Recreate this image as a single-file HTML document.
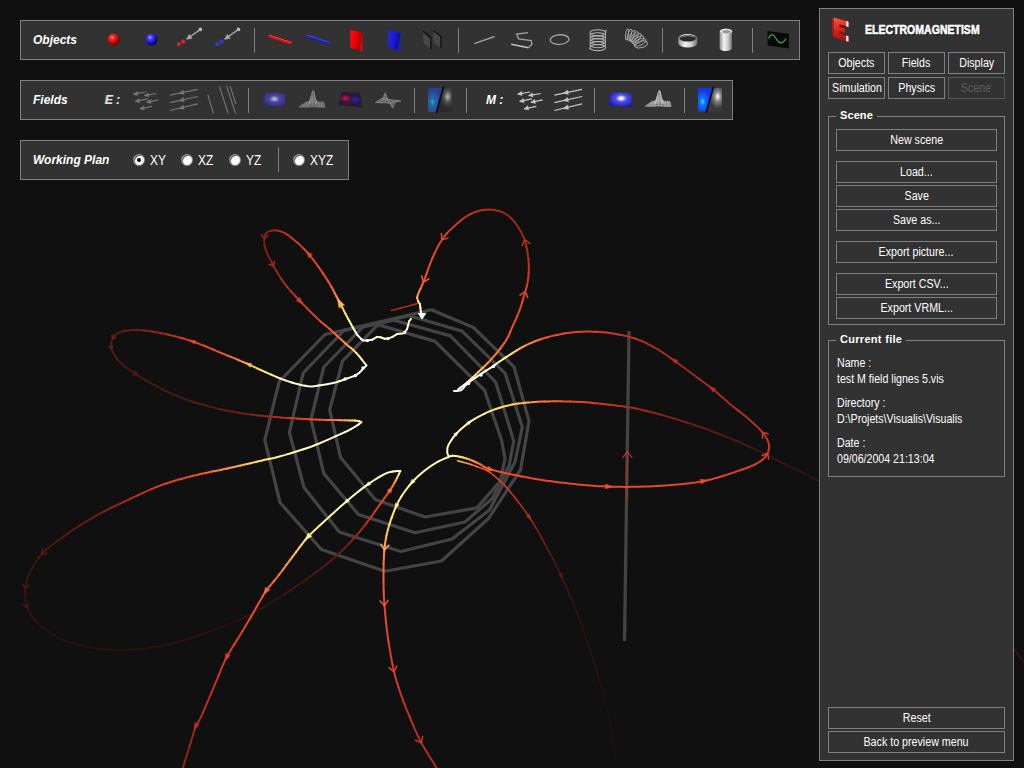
<!DOCTYPE html>
<html><head><meta charset="utf-8"><title>Electromagnetism</title>
<style>
html,body{margin:0;padding:0;}
body{width:1024px;height:768px;overflow:hidden;background:#101010;position:relative;font-family:"Liberation Sans",sans-serif;color:#fff;}
#scene{position:absolute;left:0;top:0;width:1024px;height:768px;}
.tb{position:absolute;box-sizing:border-box;border:1px solid #808080;background:#323232;height:40px;left:20px;}
.tb svg{position:absolute;left:-1px;top:-1px;}
.tl{position:absolute;top:0;line-height:38px;font-size:12px;font-weight:bold;font-style:italic;color:#fff;white-space:nowrap;}
.rl{position:absolute;top:1px;line-height:38px;font-size:13px;color:#fff;white-space:nowrap;transform:scale(0.92,1.06);transform-origin:0 50%;}
.rad{position:absolute;top:13px;width:12px;height:12px;border-radius:50%;background:#fff;box-sizing:border-box;border:1px solid #8a8478;box-shadow:inset 1px 1px 0 #555;}
.rad.on:after{content:"";position:absolute;left:3px;top:3px;width:4px;height:4px;border-radius:50%;background:#000;}
#panel{position:absolute;left:819px;top:8px;width:195px;height:753px;box-sizing:border-box;border:1px solid #808080;background:#323232;}
.btn{position:absolute;box-sizing:border-box;border:1px solid #808080;background:#323232;color:#fff;font-size:12px;text-align:center;height:22px;line-height:20px;white-space:nowrap;}
.btn .t{display:inline-block;transform:scaleX(0.89);transform-origin:50% 50%;}
.btn.dis{color:#5c5c5c;border-color:#555;}
.fs{position:absolute;box-sizing:border-box;border:1px solid #808080;}
.lg{position:absolute;background:#323232;font-size:11px;font-weight:bold;color:#fff;line-height:12px;padding:0 4px;letter-spacing:0.1px;white-space:nowrap;}
.tx{position:absolute;left:17px;font-size:12px;line-height:14px;color:#fff;white-space:nowrap;transform:scaleX(0.885);transform-origin:0 50%;}
#title{position:absolute;left:45px;top:14px;font-size:13px;font-weight:bold;line-height:14px;color:#fff;white-space:nowrap;transform-origin:0 50%;transform:scaleX(0.81);-webkit-text-stroke:0.6px #fff;text-shadow:1px 1px 1px #111;}
</style></head><body>
<svg id="scene" width="1024" height="768" viewBox="0 0 1024 768"><g fill="none" stroke-linecap="round" stroke-linejoin="round">
<path d="M325.0 334.5L279.2 381.6L264.8 440.0L280.0 502.5L321.4 549.5L384.8 571.2L441.5 561.0L488.5 518.5L520.5 470.0L529.0 421.0L514.0 366.8L473.4 327.5L431.4 309.8Z" stroke="#444444" stroke-width="3.2"/>
<path d="M343.8 330.6L303.2 373.0L289.4 432.5L304.0 487.5L339.3 532.0L400.8 551.5L452.0 539.0L489.5 510.0L515.0 462.0L522.3 427.0L505.2 373.4L462.4 331.3L409.4 315.8Z" stroke="#444444" stroke-width="3.2"/>
<path d="M362.5 327.3L323.8 367.0L311.0 419.5L323.8 473.6L358.5 514.5L415.0 532.8L465.0 522.0L492.2 498.5L509.0 466.0L513.8 441.0L495.6 382.0L450.5 335.9L393.8 320.2Z" stroke="#444444" stroke-width="3.2"/>
<path d="M378.0 324.6L342.5 361.0L329.7 410.2L340.6 457.6L375.3 499.5L425.0 517.0L476.9 507.9L500.4 481.0L505.0 458.6L501.5 440.0L484.6 390.4L435.0 341.4L378.0 324.6Z" stroke="#444444" stroke-width="3.2"/>
<path d="M629 331L624.5 641" stroke="#434343" stroke-width="3.3" stroke-linecap="butt"/>
<path d="M627.3 452L626.8 500" stroke="#a83426" stroke-width="1.3"/><path d="M622.8 457.5L627.4 451.5L632 457.5" stroke="#c03a2a" stroke-width="1.2"/>
<path d="M601.0 686.3L601.9 689.5L602.7 692.7L603.5 696.0L604.4 699.2L605.1 702.4L605.9 705.5L606.7 708.6L607.4 711.7L608.1 714.6L608.8 717.5L609.4 720.4L610.0 723.1L610.6 725.6L611.1 728.1L611.9 732.3L612.7 736.4L613.3 740.3L613.8 744.0L614.2 747.4L614.6 750.5L614.9 753.4L615.1 755.9L615.4 758.1L615.6 759.9" stroke="#1e110f" stroke-width="1.6"/>
<path d="M581.3 624.7L582.3 627.4L583.3 630.1L584.3 632.9L585.3 635.7L586.3 638.6L587.3 641.5L588.2 644.4L589.2 647.4L590.2 650.3L591.2 653.3L592.1 656.2L593.1 659.2L594.0 662.2L594.9 665.1L595.8 668.0L596.7 670.9L597.5 673.8L598.4 676.9L599.3 680.0L600.1 683.1L601.0 686.3" stroke="#281210" stroke-width="1.6"/>
<path d="M35.8 620.9L38.4 623.6L40.6 625.6L43.0 627.7L45.5 629.7L48.2 631.7L51.0 633.6L53.9 635.4L56.9 637.1L59.8 638.6L62.8 639.9L65.8 641.1L68.9 642.2L72.1 643.1L75.3 644.0L78.6 644.8L82.0 645.6L85.4 646.3L88.2 646.9L91.1 647.4L94.1 647.9L97.1 648.4L100.1 648.8L103.1 649.2L106.2 649.5L109.3 649.8L112.3 650.0L115.3 650.1L118.6 650.2L121.9 650.2L125.1 650.1L128.4 650.0L131.6 649.8L134.9 649.5L138.3 649.2L141.7 648.8L145.2 648.4L148.1 648.0L151.2 647.5L154.2 647.0L157.3 646.5L160.5 645.9L163.6 645.3L166.8 644.6L170.0 643.9L173.1 643.2L176.3 642.4L179.4 641.6L182.2 640.8L185.1 640.0L187.9 639.1L190.8 638.2L193.6 637.2L196.5 636.2L199.3 635.2L202.1 634.2L205.0 633.2L207.8 632.1L210.7 631.1L213.5 630.0L216.3 628.9L219.2 627.9L222.0 626.8L224.9 625.7L227.7 624.6L230.6 623.5L233.4 622.4L236.3 621.2L239.1 620.0" stroke="#281210" stroke-width="2"/>
<path d="M785.4 464.4L788.0 465.7L790.8 467.1L793.1 468.1L795.0 468.9L796.9 469.7L799.0 470.6L801.6 471.8L804.9 473.5L809.2 475.9L814.7 479.0L816.5 480.0L818.3 481.0L820.3 482.1L822.3 483.2L824.5 484.4L826.7 485.6L829.0 486.8L831.4 488.1L833.9 489.4L836.4 490.8L839.0 492.1L841.6 493.5L844.3 495.0L847.0 496.5L849.8 498.0L852.6 499.5L855.4 501.1L858.3 502.7L861.1 504.4L864.0 506.0L866.9 507.7L869.8 509.5L872.7 511.2L875.5 513.0L878.4 514.8L881.2 516.6L884.0 518.5L886.8 520.3L889.5 522.2L892.2 524.1L894.9 526.1L897.5 528.0L900.0 530.0L902.2 531.8L904.5 533.7L906.8 535.6L909.1 537.5L911.4 539.6L913.7 541.6L916.0 543.7L918.3 545.9L920.6 548.1L923.0 550.3L925.3 552.5L927.6 554.8L929.9 557.1L932.3 559.4L934.6 561.7L936.9 564.1L939.2 566.4L941.4 568.8L943.7 571.1L946.0 573.5L948.2 575.8L950.4 578.2L952.6 580.5L954.8 582.8L956.9 585.1L959.0 587.4L961.1 589.6L963.2 591.8L965.2 594.0L967.2 596.2L969.1 598.3L971.1 600.4L972.9 602.4L974.8 604.4L976.6 606.3L978.3 608.2L980.0 610.0L982.8 613.0L985.5 616.0L988.2 618.9L990.8 621.9L993.3 624.8L995.8 627.6L998.2 630.4L1000.5 633.2L1002.7 635.8L1004.9 638.5L1007.0 641.0L1009.0 643.5L1010.9 645.8L1012.8 648.1L1014.5 650.3L1016.1 652.3L1017.7 654.3L1019.2 656.1L1020.5 657.8L1021.8 659.3L1022.9 660.7L1024.0 662.0M25.2 593.5L25.3 596.8L25.5 600.2L26.0 603.5L26.9 606.6L28.1 609.6L29.6 612.5L31.4 615.4L33.5 618.2L35.8 620.9M239.1 620.0L242.0 618.7L244.8 617.4L247.7 616.0L250.3 614.7L253.0 613.3L255.6 611.8L258.2 610.4L260.9 608.9L263.5 607.3L266.1 605.8L268.8 604.2L271.4 602.5L274.0 600.9L276.6 599.2L279.3 597.6L281.9 595.9L284.5 594.2" stroke="#321411" stroke-width="2"/>
<path d="M570.7 597.6L571.9 600.6L573.2 603.6L574.5 606.7L575.7 609.8L577.0 613.0L578.2 616.2L579.4 619.4L580.4 622.0L581.3 624.7" stroke="#321411" stroke-width="1.6"/>
<path d="M749.2 446.6L752.0 447.8L754.7 449.1L757.5 450.4L760.3 451.7L763.1 453.1L765.9 454.5L768.7 455.9L771.6 457.3L774.4 458.8L777.2 460.2L780.0 461.6L782.7 463.0L785.4 464.4M38.2 558.7L36.2 561.5L34.3 564.4L32.7 567.2L31.2 569.9L29.9 572.4L28.4 575.6L27.3 578.5L26.5 581.2L26.0 584.1L25.6 587.3L25.4 590.3L25.2 593.5M284.5 594.2L287.2 592.5L289.9 590.7L292.7 588.9L295.4 587.0L298.1 585.2L300.8 583.3L303.5 581.4L306.1 579.6L308.7 577.7L311.2 575.9L313.7 574.1" stroke="#3e1612" stroke-width="2"/>
<path d="M562.4 578.7L563.5 581.2L564.6 583.7L565.8 586.4L567.0 589.1L568.2 591.9L569.4 594.7L570.7 597.6" stroke="#3e1612" stroke-width="1.6"/>
<path d="M724.1 435.9L727.1 437.1L729.9 438.2L732.6 439.4L735.4 440.5L738.2 441.7L740.9 442.9L743.7 444.1L746.4 445.3L749.2 446.6M117.7 359.5L120.1 362.2L122.3 364.3L124.6 366.3L127.1 368.2L129.9 370.1L132.9 372.1L136.1 374.2L138.4 375.7L140.8 377.2L143.4 378.8L146.0 380.4L148.8 382.0L151.6 383.6L154.4 385.2L157.3 386.7L160.2 388.2L162.8 389.5L165.6 390.8L168.3 392.1L171.1 393.3L174.0 394.6L176.8 395.8L179.7 397.0L182.5 398.1L185.4 399.2L188.2 400.2L191.3 401.3M66.5 534.4L64.1 536.1L61.3 538.1L58.6 540.0L56.0 541.9L53.5 543.7L51.2 545.6L48.9 547.4L46.7 549.3L44.7 551.2L42.7 553.2L40.3 555.9L38.2 558.7M313.7 574.1L316.0 572.4L318.7 570.4L321.2 568.4L323.7 566.5L326.1 564.5" stroke="#4b1813" stroke-width="2"/>
<path d="M555.8 564.5L557.0 567.1L558.4 569.9L559.8 573.0L561.3 576.3L562.4 578.7" stroke="#4b1813" stroke-width="1.6"/>
<path d="M705.8 428.9L708.8 430.0L711.9 431.2L714.9 432.3L718.0 433.5L721.0 434.7L724.1 435.9M122.6 331.4L120.1 332.1L116.8 333.7L114.6 335.6M112.9 338.1L111.6 341.0L110.9 344.4L111.3 348.2L112.3 350.8L113.7 353.6L115.6 356.6L117.7 359.5M191.3 401.3L194.3 402.3L197.4 403.2L200.4 404.1L203.5 405.0L206.6 405.8L209.7 406.6L212.9 407.4L216.2 408.2L219.2 408.9M79.6 525.6L76.9 527.4L74.2 529.2L71.5 531.0L69.0 532.7L66.5 534.4M326.1 564.5L328.5 562.6L330.8 560.7L333.0 558.8L335.2 556.9L337.4 555.0" stroke="#581a14" stroke-width="2"/>
<path d="M550.6 554.6L552.0 557.1L553.3 559.5L554.5 562.0L555.8 564.5" stroke="#581a14" stroke-width="1.6"/>
<path d="M687.4 422.7L690.5 423.6L693.5 424.7L696.6 425.7L699.7 426.8L702.7 427.8L705.8 428.9M136.1 330.1L132.2 330.1L128.7 330.4L125.5 330.8L122.6 331.4M114.6 335.6L112.9 338.1M219.2 408.9L222.3 409.6L225.5 410.2L228.7 410.9L231.9 411.5L235.2 412.1L238.5 412.7M94.0 516.9L91.1 518.6L88.2 520.3L85.3 522.0L82.5 523.8L79.6 525.6M337.4 555.0L339.6 553.0L341.7 551.0L344.0 548.7" stroke="#661d16" stroke-width="2"/>
<path d="M545.0 544.1L546.4 546.6L547.7 549.1L549.2 551.9L550.6 554.6" stroke="#661d16" stroke-width="1.6"/>
<path d="M265.3 234.6L264.4 238.1L264.2 241.1L264.4 244.6M675.2 418.9L678.3 419.8L681.3 420.7L684.4 421.7L687.4 422.7M144.2 330.6L141.4 330.3L138.7 330.2L136.1 330.1M238.5 412.7L241.7 413.2L245.0 413.7L248.2 414.2L251.4 414.6M102.2 512.4L99.4 513.9L96.7 515.4L94.0 516.9M344.0 548.7L346.3 546.4L348.5 544.1" stroke="#732017" stroke-width="2"/>
<path d="M542.1 538.8L543.6 541.4L545.0 544.1" stroke="#732017" stroke-width="1.6"/>
<path d="M270.8 230.7L267.3 232.2L265.3 234.6M264.4 244.6L265.4 248.8L266.3 251.2L267.4 253.8L268.6 256.6L270.1 259.5L271.6 262.4M660.0 414.5L663.0 415.3L666.1 416.2L669.1 417.1L672.2 418.0L675.2 418.9M150.2 331.2L147.1 330.8L144.2 330.6M251.4 414.6L254.6 415.0L257.8 415.4M110.8 508.1L107.9 509.5L105.1 511.0L102.2 512.4M348.5 544.1L350.7 541.8L352.9 539.4M183.5 765.9L182.8 768.0" stroke="#812219" stroke-width="2"/>
<path d="M536.1 528.0L537.6 530.7L539.2 533.4L540.7 536.1L542.1 538.8" stroke="#812219" stroke-width="1.6"/>
<path d="M275.2 230.3L270.8 230.7M271.6 262.4L273.2 265.4L274.6 268.0L276.1 270.6M647.6 411.2L650.7 412.0L653.8 412.8L656.9 413.6L660.0 414.5M160.2 332.9L156.8 332.2L153.4 331.7L150.2 331.2M257.8 415.4L261.0 415.7L264.3 416.1L267.5 416.3M119.5 503.9L116.6 505.3L113.7 506.7L110.8 508.1M352.9 539.4L355.0 537.1L357.1 534.7M189.7 745.8L188.8 749.0L187.9 751.8L186.6 755.8L185.4 759.7L184.3 763.1L183.5 765.9" stroke="#8e251a" stroke-width="2"/>
<path d="M532.8 522.6L534.5 525.3L536.1 528.0" stroke="#8e251a" stroke-width="1.6"/>
<path d="M278.2 230.7L275.2 230.3M276.1 270.6L277.7 273.3L279.4 276.0L281.2 278.7M499.1 211.1L502.7 212.3L506.0 214.1L508.4 215.8L510.6 217.8L512.8 220.0L514.8 222.3L516.7 224.9L518.5 227.7L520.2 230.6L521.6 233.1L523.5 236.8L524.9 240.9L525.7 244.1M671.1 358.3L673.8 360.2L676.5 362.1L679.2 364.1L681.9 366.1L684.7 368.2L687.4 370.2L690.1 372.3L692.8 374.3L695.5 376.3L698.2 378.3M635.7 408.5L638.6 409.1L641.5 409.8L644.5 410.5L647.6 411.2M165.5 334.0L162.8 333.4L160.2 332.9M267.5 416.3L270.7 416.6L273.9 416.9M128.1 499.8L125.2 501.1L122.4 502.5L119.5 503.9M357.1 534.7L359.1 532.3L361.1 530.0M195.6 727.0L194.7 729.4L193.8 732.3L192.8 735.5L191.8 739.0L190.7 742.5L189.7 745.8" stroke="#9b281c" stroke-width="2"/>
<path d="M527.8 514.8L529.5 517.4L531.2 520.0L532.8 522.6" stroke="#9b281c" stroke-width="1.6"/>
<path d="M281.5 231.6L278.2 230.7M281.2 278.7L283.0 281.4L284.9 284.0L286.9 286.6M485.1 209.7L488.6 209.6L492.0 209.8L495.2 210.2L499.1 211.1M525.7 244.1L526.6 247.8L527.4 251.8L528.0 255.5L528.4 259.0M651.6 345.9L654.7 347.6L657.4 349.2L660.2 350.9L662.9 352.7L665.6 354.5L668.3 356.4L671.1 358.3M698.2 378.3L700.9 380.2L703.7 382.2L706.4 384.2L709.1 386.3L711.8 388.4L714.2 390.3L716.6 392.3L719.0 394.4L721.3 396.5L723.7 398.6L726.1 400.6L728.5 402.7L730.9 404.7L733.3 406.7L735.8 408.6L738.3 410.6M625.4 406.7L628.8 407.2L632.2 407.8L635.7 408.5M431.2 759.3L432.9 762.0L434.4 764.4L435.6 766.4L436.6 768.0M168.4 334.7L165.5 334.0M273.9 416.9L277.1 417.1L280.3 417.4M136.6 495.8L133.8 497.1L130.9 498.5L128.1 499.8M361.1 530.0L363.0 527.6L365.1 524.9M202.8 712.9L201.7 715.4L200.7 717.6L198.5 721.7L197.2 723.5L195.6 727.0" stroke="#a82c1e" stroke-width="2"/>
<path d="M522.1 506.9L524.0 509.6L525.9 512.2L527.8 514.8" stroke="#a82c1e" stroke-width="1.6"/>
<path d="M287.7 234.9L284.9 233.2L281.5 231.6M286.9 286.6L289.0 289.1L291.2 291.6M471.3 213.7L474.8 212.2L478.2 211.0L481.6 210.2L485.1 209.7M528.4 259.0L528.7 262.4L528.8 265.8M635.7 338.8L639.1 340.0L642.3 341.3L645.4 342.7L648.5 344.3L651.6 345.9M738.3 410.6L740.8 412.5L743.2 414.5L745.5 416.3L747.8 418.2L749.9 420.0L752.5 422.4L755.1 424.7L757.4 426.9L759.6 429.1M618.8 405.9L622.1 406.3L625.4 406.7M413.7 726.3L414.9 729.3L416.3 732.4L417.7 735.5L419.2 738.6L420.8 741.7L422.2 744.4L423.9 747.2L425.7 750.3L427.5 753.3L429.4 756.4L431.2 759.3M174.2 336.1L171.3 335.4L168.4 334.7M280.3 417.4L283.5 417.7L286.8 417.9M142.3 493.1L139.5 494.5L136.6 495.8M365.1 524.9L367.2 522.2M210.8 694.0L209.4 697.3L208.0 700.6L206.6 703.9L205.3 707.1L204.0 710.1L202.8 712.9" stroke="#b43020" stroke-width="2"/>
<path d="M516.2 499.2L518.1 501.7L520.1 504.3L522.1 506.9" stroke="#b43020" stroke-width="1.6"/>
<path d="M391.1 310.6L394.1 309.8L397.1 309.0L400.1 308.2" stroke="#b43020" stroke-width="1.3"/>
<path d="M290.6 237.0L287.7 234.9M291.2 291.6L293.5 294.1L295.8 296.6M462.3 219.3L465.1 217.3L467.9 215.5L471.3 213.7M528.8 265.8L528.8 269.2L528.7 272.7M619.4 334.7L622.8 335.3L626.2 336.1L629.4 336.9L632.6 337.8L635.7 338.8M759.6 429.1L761.6 431.2L763.3 433.3L765.4 436.3L767.1 439.2L768.3 442.0L769.0 444.7M609.0 404.7L612.3 405.1L615.6 405.5L618.8 405.9M405.0 705.5L406.2 708.5L407.4 711.4L408.7 714.4L410.0 717.6L411.2 720.5L412.4 723.4L413.7 726.3M180.2 337.7L177.2 336.9L174.2 336.1M286.8 417.9L290.0 418.1M150.9 489.3L148.0 490.6L145.2 491.8L142.3 493.1M367.2 522.2L369.2 519.5L371.2 516.7M218.7 675.3L217.4 678.5L216.1 681.6L214.8 684.7L213.5 687.7L212.2 690.8L210.8 694.0" stroke="#c03322" stroke-width="2"/>
<path d="M510.4 492.1L512.3 494.4L514.2 496.7L516.2 499.2" stroke="#c03322" stroke-width="1.6"/>
<path d="M400.1 308.2L403.1 307.4L406.1 306.6L409.1 305.8L412.1 305.0L415.1 304.2" stroke="#c03322" stroke-width="1.3"/>
<path d="M296.6 242.0L293.6 239.5L290.6 237.0M295.8 296.6L298.1 299.1L300.5 301.6M454.2 226.3L456.8 223.9L459.5 221.6L462.3 219.3M528.7 272.7L528.4 276.3L528.0 279.7M606.3 332.6L609.5 333.0L612.8 333.5L616.1 334.0L619.4 334.7M769.0 444.7L769.1 448.1L768.4 451.3L767.1 454.3M602.4 403.9L605.7 404.3L609.0 404.7M398.5 687.3L399.5 690.3L400.5 693.3L401.5 696.2L402.7 699.5L403.8 702.5L405.0 705.5M183.3 338.5L180.2 337.7M290.0 418.1L293.3 418.3L296.6 418.6M156.6 487.0L153.7 488.1L150.9 489.3M371.2 516.7L373.2 514.0L375.0 511.3M228.0 654.7L226.4 657.8L225.1 660.4L223.8 663.2L222.5 666.1L221.2 669.1L220.0 672.2L218.7 675.3" stroke="#cd3724" stroke-width="2"/>
<path d="M506.9 488.0L508.6 490.0L510.4 492.1" stroke="#cd3724" stroke-width="1.6"/>
<path d="M415.1 304.2L418.1 303.4" stroke="#cd3724" stroke-width="1.3"/>
<path d="M303.8 248.8L301.4 246.4L299.0 244.1L296.6 242.0M300.5 301.6L302.6 303.8L304.9 306.1L307.1 308.4M446.9 233.3L449.3 230.9L451.7 228.6L454.2 226.3M528.0 279.7L527.5 282.9L526.8 286.2M596.5 331.8L599.8 332.0L603.0 332.3L606.3 332.6M767.1 454.3L765.3 457.0L763.0 459.4L759.5 461.9L757.4 463.1L755.3 464.3M592.7 402.9L595.9 403.2L599.2 403.6L602.4 403.9M392.6 664.9L393.2 667.8L393.8 670.6L394.7 674.2L395.6 677.7L396.5 681.0L397.5 684.2L398.5 687.3M189.3 340.3L186.3 339.4L183.3 338.5M296.6 418.6L299.8 418.7M165.4 483.7L162.3 484.8L159.4 485.9L156.6 487.0M375.0 511.3L376.8 508.8L378.5 506.3M234.4 644.1L232.8 646.6L231.2 649.2L229.6 651.9L228.0 654.7" stroke="#d33b26" stroke-width="2"/>
<path d="M498.7 479.6L501.3 482.1L504.1 484.9L506.9 488.0" stroke="#d33b26" stroke-width="1.6"/>
<path d="M312.3 258.5L310.4 256.1L308.4 253.7L306.2 251.2L303.8 248.8M307.1 308.4L309.4 310.7L311.7 313.0L313.9 315.1M439.5 243.6L441.0 241.2L442.5 238.9L444.7 236.0L446.9 233.3M526.8 286.2L526.0 289.0M580.2 331.8L583.5 331.7L586.7 331.6L590.0 331.6L593.3 331.7L596.5 331.8M755.3 464.3L752.8 465.5L749.9 466.7L746.5 468.0L742.3 469.5L740.1 470.3L737.7 471.1L735.1 472.0L732.4 472.9L729.5 473.9M585.9 402.3L589.3 402.6L592.7 402.9M388.7 642.7L389.2 645.9L389.7 649.1L390.3 652.3L390.8 655.6L391.4 658.7L392.0 661.9L392.6 664.9M195.1 342.3L192.2 341.3L189.3 340.3M299.8 418.7L303.0 418.9L306.2 419.1M174.7 480.7L171.6 481.7L168.5 482.7L165.4 483.7M378.5 506.3L380.1 504.1L382.3 501.1M242.4 631.2L240.8 633.8L239.2 636.5L237.6 639.1L236.0 641.6L234.4 644.1" stroke="#da4027" stroke-width="2"/>
<path d="M493.7 475.3L496.1 477.3L498.7 479.6" stroke="#da4027" stroke-width="1.6"/>
<path d="M318.1 266.4L316.1 263.5L314.2 260.9L312.3 258.5M313.9 315.1L316.1 317.2L318.1 319.1L320.6 321.4M432.7 257.5L434.0 254.5L435.4 251.7L436.7 248.9L438.1 246.2L439.5 243.6M526.0 289.0L524.9 292.7L524.2 295.2L523.4 298.0L522.5 301.1M563.8 333.6L567.1 333.1L570.4 332.7L573.6 332.3L576.9 332.0L580.2 331.8M729.5 473.9L726.5 474.9L723.5 475.8L720.4 476.8L717.2 477.7L713.9 478.6L710.7 479.5L707.4 480.2L704.2 480.9L701.4 481.4L698.5 481.9L695.6 482.4L692.7 482.8L689.7 483.2L686.6 483.6L683.6 483.9L680.5 484.2L677.4 484.5L674.3 484.8L671.2 485.0M576.5 401.8L579.5 401.9L582.4 402.1L585.9 402.3M386.1 623.3L386.5 626.6L386.9 629.9L387.3 633.2L387.8 636.5L388.2 639.6L388.7 642.7M204.2 345.8L201.1 344.6L198.1 343.4L195.1 342.3M306.2 419.1L309.3 419.3M181.0 479.0L177.9 479.8L174.7 480.7M382.3 501.1L384.3 498.3M250.4 617.9L248.7 620.6L247.1 623.3L245.5 625.9L244.0 628.6L242.4 631.2" stroke="#e04429" stroke-width="2"/>
<path d="M489.5 472.0L491.5 473.5L493.7 475.3" stroke="#e04429" stroke-width="1.6"/>
<path d="M323.1 273.6L321.4 271.0L319.7 268.6L318.1 266.4M320.6 321.4L323.0 323.4L325.2 325.3M427.0 272.4L428.1 269.3L429.2 266.2L430.4 263.2L431.5 260.2L432.7 257.5M522.5 301.1L521.6 304.2L520.6 307.3L519.6 310.2L518.3 313.5L517.0 316.6M557.1 334.9L560.5 334.2L563.8 333.6M671.2 485.0L668.0 485.3L664.8 485.5L661.7 485.7L658.5 485.9L655.5 486.1L652.5 486.2L649.4 486.4L646.3 486.5L643.2 486.6L640.0 486.7L636.9 486.7L633.8 486.8L630.6 486.8L627.5 486.9L624.3 486.9L621.2 486.8L618.1 486.8L615.0 486.8L612.0 486.7L609.0 486.6L605.8 486.5L602.7 486.3L599.5 486.2L596.3 486.0L593.2 485.7L590.1 485.5L587.0 485.2L583.9 485.0L580.9 484.7L577.8 484.4L574.8 484.1L571.9 483.8L569.0 483.4L566.1 483.1L563.3 482.8L559.8 482.4L556.5 482.0L553.2 481.6L549.9 481.1L546.7 480.7L543.5 480.2L540.4 479.7L537.3 479.2L534.3 478.7L531.2 478.2L528.2 477.6L525.2 477.1L521.9 476.5M570.3 401.5L573.4 401.7L576.5 401.8M384.4 604.4L384.6 607.4L384.9 610.5L385.2 613.6L385.5 616.8L385.8 620.0L386.1 623.3M213.2 349.5L210.2 348.3L207.2 347.0L204.2 345.8M309.3 419.3L312.3 419.4L315.7 419.5M190.3 476.6L187.2 477.3L184.1 478.2L181.0 479.0M384.3 498.3L386.1 495.8L387.8 493.5M256.5 607.1L255.0 609.9L253.5 612.5L252.0 615.1L250.4 617.9" stroke="#e6492b" stroke-width="2"/>
<path d="M485.8 469.7L489.5 472.0" stroke="#e6492b" stroke-width="1.6"/>
<path d="M328.2 281.4L326.5 278.8L324.8 276.1L323.1 273.6M325.2 325.3L327.4 327.1L329.6 328.9M423.9 280.9L424.9 278.3L425.9 275.4L427.0 272.4M517.0 316.6L515.6 319.8L514.2 322.8L512.8 325.9L511.5 328.9L510.3 331.8M547.4 337.2L550.5 336.4L553.8 335.6L557.1 334.9M521.9 476.5L518.4 475.8L514.9 475.1L511.5 474.4L508.0 473.6L504.7 472.9L501.5 472.2L498.5 471.5L495.7 470.8L493.1 470.1L490.9 469.5M560.9 401.3L564.0 401.4L567.2 401.4L570.3 401.5M383.7 591.8L383.8 594.9L384.0 598.0L384.2 601.1L384.4 604.4M221.6 353.1L218.9 352.0L216.0 350.8L213.2 349.5M315.7 419.5L319.0 419.7M199.6 474.3L196.5 475.0L193.4 475.8L190.3 476.6M387.8 493.5L389.4 491.3M262.7 596.3L261.2 598.9L259.6 601.6L258.1 604.3L256.5 607.1" stroke="#ed4d2d" stroke-width="2"/>
<path d="M483.1 468.8L485.8 469.7" stroke="#ed4d2d" stroke-width="1.6"/>
<path d="M331.5 287.0L329.8 284.0L328.2 281.4M329.6 328.9L331.8 330.9L334.2 333.0M422.3 284.8L423.9 280.9M510.3 331.8L509.1 334.7L507.6 337.7L505.8 340.8L504.2 343.2M540.9 339.2L544.3 338.1L547.4 337.2M490.9 469.5L486.5 468.0L483.9 466.7M554.8 401.3L557.8 401.3L560.9 401.3M383.5 579.8L383.5 582.8L383.6 585.8L383.6 588.8L383.7 591.8M227.6 355.6L224.2 354.2L221.6 353.1M319.0 419.7L322.4 419.8L325.7 419.9M205.8 472.9L202.7 473.5L199.6 474.3M389.4 491.3L390.8 489.1M269.7 586.1L267.7 588.6L265.6 591.6L264.2 593.8L262.7 596.3" stroke="#f05730" stroke-width="2"/>
<path d="M477.1 466.7L480.0 467.8L483.1 468.8" stroke="#f05730" stroke-width="1.6"/>
<path d="M333.2 290.1L331.5 287.0M334.2 333.0L336.6 335.3M420.6 288.5L422.3 284.8M504.2 343.2L502.4 345.7L500.4 348.4M537.7 340.3L540.9 339.2M483.9 466.7L482.1 465.4L480.0 464.2M548.3 401.4L551.9 401.3L554.8 401.3M383.5 570.4L383.5 573.6L383.5 576.7L383.5 579.8M230.9 356.9L227.6 355.6M325.7 419.9L329.0 419.9M212.0 471.6L208.9 472.2L205.8 472.9M390.8 489.1L392.7 485.9M273.6 581.5L271.7 583.8L269.7 586.1" stroke="#f36334" stroke-width="2"/>
<path d="M334.8 293.2L333.2 290.1M336.6 335.3L339.0 337.6L341.4 339.8M500.4 348.4L498.3 351.0L496.2 353.6M534.5 341.5L537.7 340.3M480.0 464.2L476.6 462.5M544.8 401.5L548.3 401.4M383.6 563.9L383.6 567.1L383.5 570.4M236.9 359.4L234.0 358.2L230.9 356.9M329.0 419.9L332.1 420.0L335.0 420.1M215.1 471.0L212.0 471.6M279.3 574.4L277.6 576.7L275.6 579.2L273.6 581.5" stroke="#f66f38" stroke-width="2"/>
<path d="M471.0 464.6L474.1 465.6L477.1 466.7" stroke="#f66f38" stroke-width="1.6"/>
<path d="M336.4 296.3L334.8 293.2M341.4 339.8L343.6 341.8M419.0 291.9L420.6 288.5M496.2 353.6L494.1 356.1L492.1 358.4M531.4 342.8L534.5 341.5M537.8 401.8L541.3 401.6L544.8 401.5M383.9 557.5L383.7 560.7L383.6 563.9M239.8 360.6L236.9 359.4M335.0 420.1L337.8 420.1M221.3 469.8L218.2 470.4L215.1 471.0M392.7 485.9L394.4 483.0M282.8 569.8L281.1 572.1L279.3 574.4" stroke="#f97b3b" stroke-width="2"/>
<path d="M338.0 299.4L336.4 296.3M343.6 341.8L345.5 343.6M417.8 295.0L419.0 291.9M492.1 358.4L489.8 360.9L487.5 363.3M525.2 345.7L528.3 344.2L531.4 342.8M476.6 462.5L473.3 461.0M534.5 402.0L537.8 401.8M384.2 551.4L384.0 554.4L383.9 557.5M242.7 361.8L239.8 360.6M337.8 420.1L340.3 420.2M227.5 468.5L224.4 469.1L221.3 469.8M286.4 564.9L284.6 567.4L282.8 569.8" stroke="#fb8941" stroke-width="2"/>
<path d="M468.0 463.6L471.0 464.6" stroke="#fb8941" stroke-width="1.6"/>
<path d="M339.6 302.5L338.0 299.4M345.5 343.6L348.6 346.2M417.1 297.5L417.8 295.0M487.5 363.3L485.1 365.6M522.4 347.1L525.2 345.7M473.3 461.0L470.0 459.6M528.1 402.5L531.2 402.3L534.5 402.0M384.9 545.2L384.5 548.6L384.2 551.4M248.2 364.2L245.4 363.0L242.7 361.8M340.3 420.2L345.1 420.3M233.8 467.1L230.6 467.8L227.5 468.5M394.4 483.0L395.8 480.4M290.4 559.6L288.3 562.3L286.4 564.9" stroke="#fc9847" stroke-width="2"/>
<path d="M464.0 462.5L468.0 463.6" stroke="#fc9847" stroke-width="1.6"/>
<path d="M341.0 305.2L339.6 302.5M348.6 346.2L351.1 348.1M485.1 365.6L482.8 367.8M519.6 348.7L522.4 347.1M470.0 459.6L466.6 458.5M525.2 402.8L528.1 402.5M385.9 538.8L385.3 541.9L384.9 545.2M251.3 365.6L248.2 364.2M345.1 420.3L349.0 420.4M240.4 465.6L237.1 466.3L233.8 467.1M292.1 557.3L290.4 559.6" stroke="#fea74e" stroke-width="2"/>
<path d="M460.2 461.5L464.0 462.5" stroke="#fea74e" stroke-width="1.6"/>
<path d="M342.5 307.9L341.0 305.2M351.1 348.1L353.3 350.0M482.8 367.8L480.6 369.9M516.8 350.4L519.6 348.7M518.3 403.6L521.6 403.2L525.2 402.8M386.4 535.8L385.9 538.8M254.2 366.9L251.3 365.6M247.2 464.0L243.8 464.8L240.4 465.6M395.8 480.4L397.0 478.0M295.8 552.4L293.9 554.9L292.1 557.3" stroke="#ffb654" stroke-width="2"/>
<path d="M457.5 460.8L460.2 461.5" stroke="#ffb654" stroke-width="1.6"/>
<path d="M343.9 310.7L342.5 307.9M418.0 301.1L417.1 297.5M480.6 369.9L478.4 372.0M514.0 352.1L516.8 350.4M466.6 458.5L463.1 457.5M512.3 404.6L515.2 404.0L518.3 403.6M387.8 530.0L387.1 532.9L386.4 535.8M257.1 368.3L254.2 366.9M349.0 420.4L352.2 420.4M250.5 463.2L247.2 464.0M299.7 547.1L297.7 549.8L295.8 552.4" stroke="#ffc35c" stroke-width="2"/>
<path d="M345.3 313.5L343.9 310.7M353.3 350.0L356.3 353.0M478.4 372.0L475.9 374.4M511.3 353.9L514.0 352.1M506.2 405.9L509.3 405.2L512.3 404.6M389.5 524.0L388.6 527.0L387.8 530.0M259.9 369.6L257.1 368.3M352.2 420.4L355.0 420.6M256.8 461.7L253.7 462.4L250.5 463.2M397.0 478.0L398.9 474.1M301.6 544.6L299.7 547.1" stroke="#ffd065" stroke-width="2"/>
<path d="M346.7 316.1L345.3 313.5M475.9 374.4L473.4 376.7M508.7 355.5L511.3 353.9M463.1 457.5L460.0 456.8M499.8 407.7L503.0 406.8L506.2 405.9M391.6 517.8L390.5 520.9L389.5 524.0M262.7 370.9L259.9 369.6M262.4 460.4L259.7 461.0L256.8 461.7M305.6 539.6L303.6 542.0L301.6 544.6" stroke="#ffdc6e" stroke-width="2"/>
<path d="M348.1 318.7L346.7 316.1M356.3 353.0L359.3 356.4M473.4 376.7L471.1 378.9M506.2 357.1L508.7 355.5M460.0 456.8L455.9 456.1M490.2 411.1L493.3 409.9L496.5 408.7L499.8 407.7M394.9 509.2L393.8 511.9L392.7 514.8L391.6 517.8M265.5 372.2L262.7 370.9M355.0 420.6L359.1 421.3M268.8 458.9L264.8 459.8L262.4 460.4M309.9 534.8L307.5 537.4L305.6 539.6" stroke="#ffe876" stroke-width="2"/>
<path d="M349.4 321.1L348.1 318.7M419.8 303.7L418.0 301.1M471.1 378.9L468.8 380.9M484.1 413.8L487.1 412.4L490.2 411.1M401.1 496.9L399.4 499.8L397.7 503.0L396.0 506.7L394.9 509.2M271.2 374.6L268.3 373.4L265.5 372.2M276.4 457.4L273.8 458.0L271.6 458.4L268.8 458.9M398.9 474.1L400.0 471.5M319.4 525.8L317.0 528.0L314.6 530.2L312.3 532.4L309.9 534.8" stroke="#ffee86" stroke-width="2"/>
<path d="M351.1 324.3L349.4 321.1M359.3 356.4L361.8 359.5M409.1 321.3L411.0 318.9M468.8 380.9L466.7 382.8M503.0 359.2L506.2 357.1M455.9 456.1L452.5 455.8M475.3 418.5L478.2 416.8L481.1 415.3L484.1 413.8M409.5 485.3L407.3 488.1L405.1 491.0L403.0 494.0L401.1 496.9M276.9 377.1L274.0 375.9L271.2 374.6M359.1 421.3L361.3 422.0M287.9 454.1L285.2 454.9L282.6 455.6L280.3 456.3L276.4 457.4M329.0 517.0L326.8 519.1L324.6 521.1L321.9 523.5L319.4 525.8" stroke="#fff398" stroke-width="2"/>
<path d="M500.0 361.3L503.0 359.2M452.5 455.8L448.8 456.6M467.0 424.1L470.0 421.9L472.6 420.2L475.3 418.5M448.8 457.0L446.6 457.8L443.4 459.1L440.0 460.6L437.4 462.0L434.7 463.6L432.0 465.3L429.4 467.1L426.1 469.5L423.0 471.9L420.0 474.5L417.2 477.1L414.5 479.7L411.7 482.7L409.5 485.3M279.7 378.3L276.9 377.1M303.4 449.3L300.3 450.3L297.1 451.3L294.0 452.3L290.9 453.2L287.9 454.1M341.1 506.1L338.6 508.3L336.2 510.4L333.8 512.7L331.4 514.8L329.0 517.0" stroke="#fff7a9" stroke-width="2"/>
<path d="M352.7 327.3L351.1 324.3M361.8 359.5L364.5 363.0M420.4 307.7L419.8 303.7M466.7 382.8L463.3 385.6M497.1 363.3L500.0 361.3M448.8 456.6L447.2 452.8L447.4 447.8L448.3 445.3L450.0 442.3L451.7 439.6L453.8 436.6L456.7 433.3L458.9 431.1L461.4 428.8L464.1 426.4L467.0 424.1M285.4 380.4L282.6 379.4L279.7 378.3M361.3 422.5L359.0 424.1M318.4 443.8L315.3 445.0L312.3 446.2L309.5 447.2L306.5 448.2L303.4 449.3M358.1 491.8L355.6 493.8L353.2 495.8L350.7 497.8L348.3 499.9L345.9 501.9L343.5 504.0L341.1 506.1" stroke="#fffbba" stroke-width="2"/>
<path d="M354.3 330.1L352.7 327.3M376.9 336.9L380.5 337.2M392.5 336.9L397.4 333.9M408.1 325.2L409.1 321.3M291.7 382.5L288.3 381.4L285.4 380.4M359.0 424.1L355.6 426.3L352.0 428.5L349.6 429.8L347.3 431.0L344.4 432.3M335.8 436.2L333.2 437.4L330.5 438.6L327.6 439.9L324.6 441.2L321.5 442.5L318.4 443.8M400.5 471.0L397.3 471.1L393.0 471.5M379.5 476.9L376.6 478.6L373.6 480.5L370.5 482.6L367.3 484.8L365.1 486.4L362.8 488.1L360.5 489.9L358.1 491.8" stroke="#fffcc9" stroke-width="2"/>
<path d="M355.8 332.6L354.3 330.1M364.5 363.0L366.4 365.4M372.0 339.8L376.9 336.9M380.5 337.2L384.7 338.8M388.0 338.6L392.5 336.9M397.4 333.9L403.2 333.4M463.3 385.6L460.1 387.9M494.5 365.1L497.1 363.3M359.5 372.6L356.3 375.0L353.5 376.3L350.3 377.4L347.0 378.5L343.7 379.8L340.2 381.0M298.7 384.4L295.2 383.5L291.7 382.5M344.4 432.3L340.3 434.2L338.2 435.2L335.8 436.2M393.0 471.5L390.5 471.9L387.9 472.6L384.4 474.2L382.1 475.4L379.5 476.9" stroke="#fffdd6" stroke-width="2"/>
<path d="M357.2 334.8L355.8 332.6M384.7 338.8L388.0 338.6M407.1 329.1L408.1 325.2M420.8 311.5L420.4 307.7M460.1 387.9L458.0 389.5M492.1 366.8L494.5 365.1M366.4 365.4L364.6 367.4L362.0 370.0L359.5 372.6M340.2 381.0L336.3 382.2L333.0 383.0L329.3 383.8L325.6 384.4L322.0 385.0L318.7 385.6M305.3 385.8L302.1 385.2L298.7 384.4" stroke="#fffee4" stroke-width="2"/>
<path d="M360.8 338.6L357.2 334.8M367.0 340.6L372.0 339.8M486.5 370.3L489.0 368.8L492.1 366.8M318.7 385.6L315.5 386.1L312.2 386.4L308.3 386.2L305.3 385.8" stroke="#fffef1" stroke-width="2"/>
<path d="M363.4 340.6L360.8 338.6M363.4 340.6L367.0 340.6M404.5 332.5L407.1 329.1M421.8 316.4L420.8 311.5M454.0 391.0L457.1 391.0L461.0 390.2L463.1 388.4L465.1 385.9L468.1 383.0L470.2 381.4L472.8 379.5L475.6 377.6L478.4 375.7L481.0 373.9L483.3 372.4L486.5 370.3" stroke="#ffffff" stroke-width="2"/>
<path d="M344.2 304.8L337.6 298.8L339.0 307.6Z" fill="#ffb955" stroke="#ffb955" stroke-width="0.6"/>
<path d="M312.2 254.6L306.3 251.3L308.8 257.6Z" fill="#e4472a" stroke="#e4472a" stroke-width="0.6"/>
<path d="M296.7 300.8L302.7 303.9L299.9 297.7Z" fill="#da4027" stroke="#da4027" stroke-width="0.6"/>
<path d="M261.5 234.7L264.3 239.1L268.0 235.4" stroke="#8c241a" stroke-width="1.5"/>
<path d="M268.9 264.3L273.7 266.3L274.5 261.2" stroke="#a02a1d" stroke-width="1.5"/>
<path d="M421.6 275.9L423.4 282.1L429.0 278.8" stroke="#f36133" stroke-width="1.5"/>
<path d="M441.4 233.5L441.8 239.9L447.9 238.1" stroke="#e4472a" stroke-width="1.5"/>
<path d="M529.8 243.4L524.6 239.7L522.1 245.6" stroke="#b43020" stroke-width="1.5"/>
<path d="M527.7 297.4L525.3 291.5L520.0 295.2" stroke="#e94a2c" stroke-width="1.5"/>
<path d="M677.5 360.2L671.3 358.5L675.1 363.6Z" fill="#b43020" stroke="#b43020" stroke-width="0.6"/>
<path d="M715.5 388.6L709.5 386.5L712.8 391.9Z" fill="#b93121" stroke="#b93121" stroke-width="0.6"/>
<path d="M768.2 433.8L762.6 432.4L762.5 438.2" stroke="#d03925" stroke-width="1.5"/>
<path d="M768.6 459.0L767.7 453.3L762.3 455.5" stroke="#da4027" stroke-width="1.5"/>
<path d="M701.5 483.7L707.3 480.3L700.6 479.3Z" fill="#eb4c2c" stroke="#eb4c2c" stroke-width="0.6"/>
<path d="M605.7 488.7L612.2 486.7L605.9 484.3Z" fill="#ef532e" stroke="#ef532e" stroke-width="0.6"/>
<path d="M487.2 470.8L494.0 470.4L488.4 466.5Z" fill="#f36133" stroke="#f36133" stroke-width="0.6"/>
<path d="M456.3 435.9L458.2 431.7L454.1 433.8Z" fill="#fffdd4" stroke="#fffdd4" stroke-width="0.6"/>
<path d="M469.1 424.4L471.8 420.7L467.3 421.9Z" fill="#fffcc9" stroke="#fffcc9" stroke-width="0.6"/>
<path d="M412.0 479.5L410.0 484.7L414.8 481.9Z" fill="#fffcbe" stroke="#fffcbe" stroke-width="0.6"/>
<path d="M395.4 503.6L395.0 509.1L398.7 505.0Z" fill="#fff5a2" stroke="#fff5a2" stroke-width="0.6"/>
<path d="M380.9 544.4L384.4 549.9L388.9 545.2" stroke="#fead50" stroke-width="1.5"/>
<path d="M380.1 600.9L384.5 605.7L388.1 600.3" stroke="#f05730" stroke-width="1.5"/>
<path d="M389.1 667.8L394.1 671.8L396.8 666.0" stroke="#df4329" stroke-width="1.5"/>
<path d="M415.5 740.2L421.4 742.8L422.6 736.5" stroke="#c83623" stroke-width="1.5"/>
<path d="M526.5 516.2L530.9 519.6L529.6 514.2Z" fill="#af2e1f" stroke="#af2e1f" stroke-width="0.6"/>
<path d="M558.6 574.7L562.4 578.7L561.9 573.2Z" fill="#5a1b15" stroke="#5a1b15" stroke-width="0.6"/>
<path d="M251.3 363.6L245.8 363.2L249.9 366.9Z" fill="#ffb955" stroke="#ffb955" stroke-width="0.6"/>
<path d="M195.2 340.4L189.7 340.5L194.1 343.8Z" fill="#e4472a" stroke="#e4472a" stroke-width="0.6"/>
<path d="M112.0 335.4L112.6 338.7L115.7 337.4" stroke="#762018" stroke-width="1.5"/>
<path d="M108.7 346.9L111.5 348.8L112.7 345.7" stroke="#6b1e16" stroke-width="1.5"/>
<path d="M133.3 374.9L136.7 374.6L135.6 371.4" stroke="#601c15" stroke-width="1.5"/>
<path d="M42.5 549.0L42.0 553.9L46.9 553.2" stroke="#5a1b15" stroke-width="1.5"/>
<path d="M22.8 584.2L25.5 588.3L28.9 584.7" stroke="#501914" stroke-width="1.5"/>
<path d="M23.1 604.9L27.2 607.5L28.8 602.9" stroke="#461713" stroke-width="1.5"/>
<path d="M390.9 492.8L392.4 486.6L387.4 490.5Z" fill="#f56a36" stroke="#f56a36" stroke-width="0.6"/>
<path d="M368.3 482.0L365.4 486.2L370.2 484.8Z" fill="#fffede" stroke="#fffede" stroke-width="0.6"/>
<path d="M346.6 499.1L344.1 503.5L348.8 501.6Z" fill="#fffdce" stroke="#fffdce" stroke-width="0.6"/>
<path d="M308.0 533.3L305.2 539.9L311.5 536.4Z" fill="#fff294" stroke="#fff294" stroke-width="0.6"/>
<path d="M265.5 587.5L263.7 594.4L269.5 590.1Z" fill="#f56a36" stroke="#f56a36" stroke-width="0.6"/>
<path d="M225.8 653.7L224.9 660.8L230.1 655.8Z" fill="#da4027" stroke="#da4027" stroke-width="0.6"/>
<path d="M194.6 723.0L194.4 730.2L199.0 724.6Z" fill="#b43020" stroke="#b43020" stroke-width="0.6"/>
<path d="M418.6 313.5L422 318.6L425.6 313.5Z" fill="#fff" stroke="#fff" stroke-width="1.2"/>
<circle cx="367.5" cy="340.6" r="1.7" fill="#fff"/>
<circle cx="388" cy="338.6" r="1.7" fill="#fffbe0"/>
<circle cx="404.5" cy="332.6" r="1.7" fill="#fffbe0"/>
<circle cx="345" cy="379" r="1.7" fill="#fff"/>
<circle cx="355.5" cy="375.5" r="1.7" fill="#fff"/>
<circle cx="363" cy="368" r="1.7" fill="#fff"/>
<circle cx="468.5" cy="383.5" r="1.7" fill="#fff"/>
<circle cx="481" cy="375" r="1.7" fill="#fff"/>
<circle cx="493.5" cy="366.5" r="1.7" fill="#fff"/>
</g></svg>
<div class="tb" style="top:20px;width:780px;"><span class="tl" style="left:12px;">Objects</span><!--OBJ--></div>
<div class="tb" style="top:80px;width:713px;"><span class="tl" style="left:12px;">Fields</span><span class="tl" style="left:84px;color:#e2e2e2;text-shadow:-1px 0 0 #6a6a6a;">E :</span><span class="tl" style="left:465px;">M :</span><!--FLD--></div>
<div class="tb" style="top:140px;width:329px;"><span class="tl" style="left:12px;">Working Plan</span>
<span class="rad on" style="left:112px;"></span><span class="rl" style="left:129px;">XY</span>
<span class="rad" style="left:160px;"></span><span class="rl" style="left:177px;">XZ</span>
<span class="rad" style="left:208px;"></span><span class="rl" style="left:225px;">YZ</span>
<!--WP-->
<span class="rad" style="left:272px;"></span><span class="rl" style="left:289px;">XYZ</span>
</div>
<div id="panel">
<svg width="24" height="30" viewBox="0 0 24 30" style="position:absolute;left:10px;top:7px;"><defs><linearGradient id="lg1" x1="0" x2="0.4" y1="0" y2="1"><stop offset="0" stop-color="#ff5a48"/><stop offset="0.5" stop-color="#e02a20"/><stop offset="1" stop-color="#b01410"/></linearGradient></defs>
<g transform="translate(2.5,1.2) skewY(15.5)"><path d="M2.2 0L16 0L16 5.4L7 5.4L7 7.8L12.6 7.8L12.6 12.2L7 12.2L7 14.6L16 14.6L16 20L2 20L0 17.6L0 2.6Q0 0 2.2 0Z" fill="url(#lg1)"/>
<path d="M7 5.4L14 5.4L14 6.6L7 7.8ZM7 12.2L11 12.2L11 13.4L7 14.6Z" fill="#7a100c"/>
<path d="M13.6 0L16 0L16 5.4L13.6 5.4ZM13.6 14.6L16 14.6L16 20L13.6 20Z" fill="#fbe4e0"/><path d="M0 2.6Q0 0.6 1.4 0.2L1.4 19.2L0 17.6Z" fill="#a81a12"/></g></svg>
<div id="title">ELECTROMAGNETISM</div>
<div class="btn" style="left:8px;top:43px;width:57px;"><span class="t">Objects</span></div>
<div class="btn" style="left:68px;top:43px;width:57px;"><span class="t">Fields</span></div>
<div class="btn" style="left:128px;top:43px;width:57px;"><span class="t">Display</span></div>
<div class="btn" style="left:8px;top:68px;width:57px;"><span class="t">Simulation</span></div>
<div class="btn" style="left:68px;top:68px;width:57px;"><span class="t">Physics</span></div>
<div class="btn dis" style="left:128px;top:68px;width:57px;"><span class="t">Scene</span></div>
<div class="fs" style="left:8px;top:107px;width:177px;height:209px;"></div>
<div class="lg" style="left:16px;top:100px;">Scene</div>
<div class="btn" style="left:16px;top:120px;width:161px;"><span class="t">New scene</span></div>
<div class="btn" style="left:16px;top:152px;width:161px;"><span class="t">Load...</span></div>
<div class="btn" style="left:16px;top:176px;width:161px;"><span class="t">Save</span></div>
<div class="btn" style="left:16px;top:200px;width:161px;"><span class="t">Save as...</span></div>
<div class="btn" style="left:16px;top:232px;width:161px;"><span class="t">Export picture...</span></div>
<div class="btn" style="left:16px;top:264px;width:161px;"><span class="t">Export CSV...</span></div>
<div class="btn" style="left:16px;top:288px;width:161px;"><span class="t">Export VRML...</span></div>
<div class="fs" style="left:8px;top:331px;width:177px;height:137px;"></div>
<div class="lg" style="left:16px;top:324px;letter-spacing:0.3px;">Current file</div>
<div class="tx" style="top:347px;">Name :</div>
<div class="tx" style="top:363px;">test M field lignes 5.vis</div>
<div class="tx" style="top:387px;">Directory :</div>
<div class="tx" style="top:403px;">D:\Projets\Visualis\Visualis</div>
<div class="tx" style="top:427px;">Date :</div>
<div class="tx" style="top:443px;">09/06/2004 21:13:04</div>
<div class="btn" style="left:8px;top:698px;width:177px;"><span class="t">Reset</span></div>
<div class="btn" style="left:8px;top:722px;width:177px;"><span class="t">Back to preview menu</span></div>
</div>
<svg id="icons" width="1024" height="768" viewBox="0 0 1024 768" style="position:absolute;left:0;top:0;pointer-events:none">
<defs>
<radialGradient id="gr" cx="0.38" cy="0.32" r="0.7"><stop offset="0" stop-color="#ffd0d0"/><stop offset="0.18" stop-color="#ff3030"/><stop offset="0.6" stop-color="#d00808"/><stop offset="1" stop-color="#5a0000"/></radialGradient>
<radialGradient id="gb" cx="0.38" cy="0.32" r="0.7"><stop offset="0" stop-color="#e0e0ff"/><stop offset="0.18" stop-color="#5050ff"/><stop offset="0.6" stop-color="#1818c8"/><stop offset="1" stop-color="#000050"/></radialGradient>
<linearGradient id="pr" x1="0" x2="1" y1="0" y2="0.35"><stop offset="0" stop-color="#ff0a0a"/><stop offset="0.5" stop-color="#ee0404"/><stop offset="0.9" stop-color="#b00000"/><stop offset="1" stop-color="#c81010"/></linearGradient>
<linearGradient id="pb" x1="0" x2="1" y1="0" y2="0.35"><stop offset="0" stop-color="#2626ea"/><stop offset="0.5" stop-color="#1c1cd8"/><stop offset="0.9" stop-color="#0e0e9c"/><stop offset="1" stop-color="#2020b8"/></linearGradient>
<linearGradient id="cyl" x1="0" x2="1" y1="0" y2="0"><stop offset="0" stop-color="#8a8a8a"/><stop offset="0.35" stop-color="#f4f4f4"/><stop offset="0.7" stop-color="#c8c8c8"/><stop offset="1" stop-color="#6a6a6a"/></linearGradient>
<radialGradient id="q1" cx="0.52" cy="0.45" r="0.62"><stop offset="0" stop-color="#c4c4d0"/><stop offset="0.1" stop-color="#a8a8c8"/><stop offset="0.36" stop-color="#4848a2"/><stop offset="1" stop-color="#2a2a66"/></radialGradient>
<radialGradient id="q2" cx="0.55" cy="0.42" r="0.6"><stop offset="0" stop-color="#ffffff"/><stop offset="0.12" stop-color="#f0f0ff"/><stop offset="0.38" stop-color="#5050f0"/><stop offset="1" stop-color="#1a1aa8"/></radialGradient>
<radialGradient id="qr" cx="0.3" cy="0.4" r="0.25"><stop offset="0" stop-color="#d01838" stop-opacity="0.95"/><stop offset="1" stop-color="#e01030" stop-opacity="0"/></radialGradient>
<radialGradient id="qb" cx="0.7" cy="0.48" r="0.25"><stop offset="0" stop-color="#3424d0" stop-opacity="0.95"/><stop offset="1" stop-color="#2020e0" stop-opacity="0"/></radialGradient>
<radialGradient id="s1a" cx="0.3" cy="0.58" r="0.55"><stop offset="0" stop-color="#22b0a4"/><stop offset="0.3" stop-color="#2a62ac"/><stop offset="1" stop-color="#26408e"/></radialGradient>
<radialGradient id="s1b" cx="0.72" cy="0.36" r="0.5"><stop offset="0" stop-color="#b8b8b8"/><stop offset="0.5" stop-color="#4a4a4a"/><stop offset="1" stop-color="#2a2a2a"/></radialGradient>
<radialGradient id="s2a" cx="0.3" cy="0.58" r="0.5"><stop offset="0" stop-color="#20e0ff"/><stop offset="0.35" stop-color="#1070ff"/><stop offset="1" stop-color="#1038e0"/></radialGradient>
<radialGradient id="s2b" cx="0.72" cy="0.36" r="0.5"><stop offset="0" stop-color="#ffffff"/><stop offset="0.45" stop-color="#808080"/><stop offset="1" stop-color="#3a3a3a"/></radialGradient>
</defs>
<circle cx="113.7" cy="39.6" r="6" fill="url(#gr)"/>
<circle cx="151.5" cy="39.6" r="6" fill="url(#gb)"/>
<circle cx="178.8" cy="44" r="2" fill="#e82020"/><circle cx="183.3" cy="41.4" r="2" fill="#e82020"/>
<path d="M200.4 29.4L186.6 39.2" stroke="#a8a8a8" stroke-width="1.3" fill="none"/><path d="M189.2 34.2L186.6 39.2L192.2 38.4Z" fill="#a8a8a8" stroke="#a8a8a8" stroke-width="0.4"/>
<circle cx="200.4" cy="29.4" r="1.8" fill="#b8b8b8"/>
<circle cx="216.9" cy="44" r="2" fill="#3838e8"/><circle cx="221.4" cy="41.4" r="2" fill="#3838e8"/>
<path d="M238.5 29.4L224.7 39.2" stroke="#a8a8a8" stroke-width="1.3" fill="none"/><path d="M227.3 34.2L224.7 39.2L230.3 38.4Z" fill="#a8a8a8" stroke="#a8a8a8" stroke-width="0.4"/>
<circle cx="238.5" cy="29.4" r="1.8" fill="#b8b8b8"/>
<rect x="254" y="28" width="1" height="25" fill="#808080"/>
<rect x="458" y="28" width="1" height="25" fill="#808080"/>
<rect x="662" y="28" width="1" height="25" fill="#808080"/>
<rect x="752" y="28" width="1" height="25" fill="#808080"/>
<path d="M269 35.8L291.3 43.4" stroke="#d81010" stroke-width="3"/><path d="M269 35L291.5 42.6" stroke="#ff3a3a" stroke-width="1"/>
<path d="M307 35.8L329.5 43.4" stroke="#1c1cc0" stroke-width="3"/><path d="M307 35L329.7 42.6" stroke="#4848f0" stroke-width="1"/>
<path d="M350.2 29.7L362.6 32.7L362.6 51.5L350.2 47.8Z" fill="url(#pr)"/>
<path d="M388.3 29.7L400.7 32.7L400.7 51.5L388.3 47.8Z" fill="url(#pb)"/>
<path d="M423.3 31.1L430.8 38.1L430.8 49.7L423.3 42.4Z" fill="#474747"/><path d="M423.3 31.1L430.8 38.1L430.8 49.7" stroke="#141414" stroke-width="1.5" fill="none"/>
<path d="M433.5 30.6L441 36.5L441 48.3L433.5 41.9Z" fill="#474747"/><path d="M433.5 30.6L441 36.5L441 48.3" stroke="#141414" stroke-width="1.5" fill="none"/>
<path d="M474.3 43.7L494.6 36.5" stroke="#a0a0a0" stroke-width="1.4"/>
<path d="M528 32.6L516.6 34L518.6 38.8L531.3 40.6L531.9 44.3L528.4 47.8" stroke="#a0a0a0" stroke-width="1.3" fill="none"/><path d="M528.4 47.8L511.2 44.3" stroke="#c4c4c4" stroke-width="1.6" fill="none"/>
<ellipse cx="559.6" cy="39.6" rx="9.4" ry="4.8" stroke="#a0a0a0" stroke-width="1.4" fill="none" transform="rotate(-4 559.6 39.6)"/>
<ellipse cx="597.8" cy="32.8" rx="7.9" ry="3.1" stroke="#b4b4b4" stroke-width="1.05" fill="none"/>
<ellipse cx="597.8" cy="35.8" rx="7.9" ry="3.1" stroke="#b4b4b4" stroke-width="1.05" fill="none"/>
<ellipse cx="597.8" cy="38.7" rx="7.9" ry="3.1" stroke="#b4b4b4" stroke-width="1.05" fill="none"/>
<ellipse cx="597.8" cy="41.6" rx="7.9" ry="3.1" stroke="#b4b4b4" stroke-width="1.05" fill="none"/>
<ellipse cx="597.8" cy="44.6" rx="7.9" ry="3.1" stroke="#b4b4b4" stroke-width="1.05" fill="none"/>
<ellipse cx="597.8" cy="47.5" rx="7.9" ry="3.1" stroke="#b4b4b4" stroke-width="1.05" fill="none"/>
<path d="M605.6 32.8L606.3 29.6M589.9 47.6L590.3 50" stroke="#b0b0b0" stroke-width="1"/>
<ellipse cx="627.0" cy="34.4" rx="5.4" ry="1.3" stroke="#a4a4a4" stroke-width="1" fill="none" transform="rotate(-82 627.0 34.4)"/>
<ellipse cx="629.5" cy="34.8" rx="5.6" ry="1.6" stroke="#a4a4a4" stroke-width="1" fill="none" transform="rotate(-72 629.5 34.8)"/>
<ellipse cx="632.0" cy="35.6" rx="5.7" ry="1.9" stroke="#a4a4a4" stroke-width="1" fill="none" transform="rotate(-63 632.0 35.6)"/>
<ellipse cx="634.3" cy="36.8" rx="5.9" ry="2.2" stroke="#a4a4a4" stroke-width="1" fill="none" transform="rotate(-53 634.3 36.8)"/>
<ellipse cx="636.4" cy="38.3" rx="6.1" ry="2.4" stroke="#a4a4a4" stroke-width="1" fill="none" transform="rotate(-43 636.4 38.3)"/>
<ellipse cx="638.3" cy="40.1" rx="6.3" ry="2.7" stroke="#a4a4a4" stroke-width="1" fill="none" transform="rotate(-33 638.3 40.1)"/>
<ellipse cx="639.8" cy="42.2" rx="6.4" ry="3.0" stroke="#a4a4a4" stroke-width="1" fill="none" transform="rotate(-24 639.8 42.2)"/>
<ellipse cx="641.0" cy="44.4" rx="6.6" ry="3.3" stroke="#a4a4a4" stroke-width="1" fill="none" transform="rotate(-14 641.0 44.4)"/>
<path d="M678.2 38.5A9.6 4.6 0 0 1 697.4 38.5L697.4 43A9.6 4.6 0 0 1 678.2 43Z" fill="url(#cyl)"/>
<ellipse cx="687.8" cy="38.3" rx="8.2" ry="3.3" fill="#2a2a2a"/><path d="M679.6 38.6A8.2 3.3 0 0 1 696 38.6A8.2 2.4 0 0 0 679.6 38.6Z" fill="#8a8a8a"/>
<path d="M719.6 32A6.2 2.8 0 0 1 732 31L732 48A6.2 2.8 0 0 1 719.6 48.6Z" fill="url(#cyl)"/>
<ellipse cx="726.2" cy="31.4" rx="6" ry="2.6" fill="#e8e8e8"/><ellipse cx="726.6" cy="31.8" rx="4.4" ry="1.7" fill="#9a9a9a"/>
<path d="M767.5 31.1L788.8 33.8L788.8 48.6L767.5 45.5Z" fill="#080808"/>
<path d="M768.5 38.5C771 33.5 773.5 34 776 38.5S782 45.5 786 38.5" stroke="#38b048" stroke-width="1.2" fill="none"/>
<rect x="248" y="88" width="1" height="25" fill="#808080"/>
<rect x="414" y="88" width="1" height="25" fill="#808080"/>
<rect x="466" y="88" width="1" height="25" fill="#808080"/>
<rect x="594" y="88" width="1" height="25" fill="#808080"/>
<rect x="684" y="88" width="1" height="25" fill="#808080"/>
<path d="M145.7 92.0L133.4 94.2" stroke="#767676" stroke-width="1.2" fill="none"/><path d="M137.1 91.3L133.4 94.2L137.9 95.6Z" fill="#767676" stroke="#767676" stroke-width="0.4"/><path d="M156.4 93.5L144.3 95.6" stroke="#767676" stroke-width="1.2" fill="none"/><path d="M148.1 92.7L144.3 95.6L148.8 97.0Z" fill="#767676" stroke="#767676" stroke-width="0.4"/><path d="M147.6 98.8L135.3 101.4" stroke="#767676" stroke-width="1.2" fill="none"/><path d="M139.0 98.4L135.3 101.4L139.9 102.7Z" fill="#767676" stroke="#767676" stroke-width="0.4"/><path d="M158.4 99.8L146.6 102.3" stroke="#767676" stroke-width="1.2" fill="none"/><path d="M150.3 99.3L146.6 102.3L151.2 103.6Z" fill="#767676" stroke="#767676" stroke-width="0.4"/><path d="M152.1 106.3L139.8 108.8" stroke="#767676" stroke-width="1.2" fill="none"/><path d="M143.5 105.8L139.8 108.8L144.4 110.1Z" fill="#767676" stroke="#767676" stroke-width="0.4"/>
<path d="M197.8 89.3L170.0 95.1" stroke="#767676" stroke-width="1.2" fill="none"/><path d="M183.3 90.1L178.9 93.2L184.2 94.4Z" fill="#767676" stroke="#767676" stroke-width="0.4"/><path d="M197.8 96.5L170.0 102.7" stroke="#767676" stroke-width="1.2" fill="none"/><path d="M183.3 97.5L178.9 100.7L184.3 101.8Z" fill="#767676" stroke="#767676" stroke-width="0.4"/><path d="M197.8 103.9L170.0 110.5" stroke="#767676" stroke-width="1.2" fill="none"/><path d="M183.3 105.1L178.9 108.4L184.3 109.4Z" fill="#767676" stroke="#767676" stroke-width="0.4"/>
<path d="M530.0 92.0L517.7 94.2" stroke="#c8c8c8" stroke-width="1.2" fill="none"/><path d="M521.4 91.3L517.7 94.2L522.2 95.6Z" fill="#c8c8c8" stroke="#c8c8c8" stroke-width="0.4"/><path d="M540.7 93.5L528.6 95.6" stroke="#c8c8c8" stroke-width="1.2" fill="none"/><path d="M532.4 92.7L528.6 95.6L533.1 97.0Z" fill="#c8c8c8" stroke="#c8c8c8" stroke-width="0.4"/><path d="M531.9 98.8L519.6 101.4" stroke="#c8c8c8" stroke-width="1.2" fill="none"/><path d="M523.3 98.4L519.6 101.4L524.2 102.7Z" fill="#c8c8c8" stroke="#c8c8c8" stroke-width="0.4"/><path d="M542.7 99.8L530.9 102.3" stroke="#c8c8c8" stroke-width="1.2" fill="none"/><path d="M534.6 99.3L530.9 102.3L535.5 103.6Z" fill="#c8c8c8" stroke="#c8c8c8" stroke-width="0.4"/><path d="M536.4 106.3L524.1 108.8" stroke="#c8c8c8" stroke-width="1.2" fill="none"/><path d="M527.8 105.8L524.1 108.8L528.7 110.1Z" fill="#c8c8c8" stroke="#c8c8c8" stroke-width="0.4"/>
<path d="M582.1 89.3L554.3 95.1" stroke="#c8c8c8" stroke-width="1.2" fill="none"/><path d="M567.6 90.1L563.2 93.2L568.5 94.4Z" fill="#c8c8c8" stroke="#c8c8c8" stroke-width="0.4"/><path d="M582.1 96.5L554.3 102.7" stroke="#c8c8c8" stroke-width="1.2" fill="none"/><path d="M567.6 97.5L563.2 100.7L568.6 101.8Z" fill="#c8c8c8" stroke="#c8c8c8" stroke-width="0.4"/><path d="M582.1 103.9L554.3 110.5" stroke="#c8c8c8" stroke-width="1.2" fill="none"/><path d="M567.6 105.1L563.2 108.4L568.6 109.4Z" fill="#c8c8c8" stroke="#c8c8c8" stroke-width="0.4"/>
<path d="M207.8 94.5L213.4 113.5M219.3 86.3L228.3 113.5M226.7 86.3L235.5 113.5M230.2 86.3L236 104.3" stroke="#707070" stroke-width="1.2" fill="none"/>
<path d="M265.5 92.2L285.5 93.3L285.5 107.2L262.5 105.1Z" fill="url(#q1)"/>
<path d="M341.7 92.1L360.5 93.1L362.1 107.4L338.5 104.9Z" fill="#2e1838"/><path d="M341.7 92.1L360.5 93.1L362.1 107.4L338.5 104.9Z" fill="url(#qr)"/><path d="M341.7 92.1L360.5 93.1L362.1 107.4L338.5 104.9Z" fill="url(#qb)"/>
<g opacity="0.9" stroke="#a0a0a0" stroke-width="0.55" fill="none"><path d="M299.1 106.9L306.5 101.5L323.6 102.10000000000001L324.9 107.4Z" fill="#a0a0a0" fill-opacity="0.38" stroke="none"/><path d="M299.1 107.1L300.1 107.1L301.1 107.1L302.1 107.1L303.1 107.1L304.1 107.1L305.1 107.1L306.0 107.1L307.0 107.1L308.0 107.1L309.0 106.9L310.0 106.7L311.0 106.3L312.0 105.9L313.0 105.7L314.0 105.9L315.0 106.3L316.0 106.7L317.0 106.9L318.0 107.1L318.9 107.1L319.9 107.1L320.9 107.1L321.9 107.1L322.9 107.1L323.9 107.1L324.9 107.1"/><path d="M301.0 105.8L301.9 105.8L302.8 105.8L303.7 105.8L304.6 105.8L305.5 105.8L306.4 105.8L307.3 105.7L308.2 105.5L309.1 104.8L310.0 103.5L310.9 101.4L311.9 99.3L312.8 98.1L313.7 98.5L314.6 100.3L315.5 102.5L316.4 104.2L317.3 105.2L318.2 105.6L319.1 105.8L320.0 105.8L320.9 105.8L321.8 105.8L322.8 105.8L323.7 105.8L324.6 105.8"/><path d="M302.8 104.5L303.6 104.5L304.4 104.5L305.3 104.5L306.1 104.5L306.9 104.5L307.8 104.2L308.6 103.6L309.4 102.2L310.2 99.7L311.1 96.3L311.9 92.9L312.7 90.8L313.5 91.2L314.4 93.7L315.2 97.3L316.0 100.5L316.8 102.7L317.6 103.8L318.5 104.3L319.3 104.5L320.1 104.5L320.9 104.5L321.8 104.5L322.6 104.5L323.4 104.5L324.2 104.5"/><path d="M304.7 103.3L305.4 103.3L306.1 103.3L306.9 103.2L307.6 103.1L308.4 102.9L309.1 102.3L309.8 101.3L310.6 99.8L311.3 98.0L312.1 96.3L312.8 95.5L313.5 95.8L314.3 97.0L315.0 98.8L315.8 100.5L316.5 101.8L317.3 102.6L318.0 103.0L318.7 103.2L319.5 103.3L320.2 103.3L321.0 103.3L321.7 103.3L322.4 103.3L323.2 103.3L323.9 103.3"/><path d="M306.5 102.0L307.2 102.0L307.8 102.0L308.5 101.9L309.1 101.8L309.8 101.7L310.4 101.4L311.1 101.1L311.8 100.9L312.4 100.7L313.1 100.6L313.7 100.7L314.4 100.9L315.0 101.2L315.7 101.5L316.4 101.7L317.0 101.8L317.7 101.9L318.3 102.0L319.0 102.0L319.7 102.0L320.3 102.0L321.0 102.0L321.6 102.0L322.3 102.0L322.9 102.0L323.6 102.0"/><path d="M299.1 107.0Q302.8 104.3 306.5 101.6"/><path d="M302.3 107.0Q305.5 104.3 308.6 101.7"/><path d="M305.6 107.1Q308.2 103.2 310.8 101.7"/><path d="M308.8 107.2Q310.8 89.6 312.9 101.8"/><path d="M312.0 107.2Q313.5 77.5 315.1 101.9"/><path d="M315.2 107.2Q316.2 97.5 317.2 101.9"/><path d="M318.5 107.3Q318.9 104.1 319.3 102.0"/><path d="M321.7 107.3Q321.6 104.3 321.5 102.0"/><path d="M324.9 107.4Q324.2 104.3 323.6 102.1"/><path d="M307.4 104.5C310.2 103.7 311.0 90.9 313.0 90.0C315.0 90.9 316.0 103.9 319.0 104.7Z" fill="#a0a0a0" fill-opacity="0.42" stroke="none"/></g>
<g opacity="0.9" stroke="#dcdcdc" stroke-width="0.55" fill="none"><path d="M645.3 106.2L652.7 100.8L669.8 101.4L671.1 106.7Z" fill="#dcdcdc" fill-opacity="0.38" stroke="none"/><path d="M645.3 106.4L646.3 106.4L647.3 106.4L648.3 106.4L649.3 106.4L650.3 106.4L651.3 106.4L652.2 106.4L653.2 106.4L654.2 106.4L655.2 106.2L656.2 106.0L657.2 105.6L658.2 105.2L659.2 105.1L660.2 105.2L661.2 105.6L662.2 106.0L663.2 106.2L664.2 106.4L665.1 106.4L666.1 106.4L667.1 106.4L668.1 106.4L669.1 106.4L670.1 106.4L671.1 106.4"/><path d="M647.2 105.1L648.1 105.1L649.0 105.1L649.9 105.1L650.8 105.1L651.7 105.1L652.6 105.1L653.5 105.0L654.4 104.8L655.3 104.2L656.2 102.9L657.1 100.9L658.1 98.8L659.0 97.6L659.9 98.0L660.8 99.8L661.7 101.9L662.6 103.6L663.5 104.5L664.4 104.9L665.3 105.1L666.2 105.1L667.1 105.1L668.0 105.1L669.0 105.1L669.9 105.1L670.8 105.1"/><path d="M649.0 103.8L649.8 103.8L650.7 103.8L651.5 103.8L652.3 103.8L653.1 103.8L654.0 103.5L654.8 102.9L655.6 101.6L656.4 99.2L657.3 95.9L658.1 92.6L658.9 90.6L659.7 90.9L660.6 93.4L661.4 96.8L662.2 100.0L663.0 102.0L663.9 103.2L664.7 103.6L665.5 103.8L666.3 103.8L667.2 103.8L668.0 103.8L668.8 103.8L669.6 103.8L670.5 103.8"/><path d="M650.9 102.6L651.6 102.6L652.3 102.6L653.1 102.5L653.8 102.4L654.6 102.2L655.3 101.6L656.0 100.7L656.8 99.2L657.5 97.4L658.3 95.9L659.0 95.1L659.7 95.3L660.5 96.6L661.2 98.3L662.0 99.9L662.7 101.2L663.5 101.9L664.2 102.3L664.9 102.5L665.7 102.6L666.4 102.6L667.2 102.6L667.9 102.6L668.6 102.6L669.4 102.6L670.1 102.6"/><path d="M652.7 101.3L653.4 101.3L654.0 101.3L654.7 101.2L655.3 101.1L656.0 101.0L656.6 100.7L657.3 100.5L658.0 100.2L658.6 100.0L659.3 100.0L659.9 100.0L660.6 100.3L661.2 100.5L661.9 100.8L662.6 101.0L663.2 101.2L663.9 101.2L664.5 101.3L665.2 101.3L665.9 101.3L666.5 101.3L667.2 101.3L667.8 101.3L668.5 101.3L669.1 101.3L669.8 101.3"/><path d="M645.3 106.3Q649.0 103.6 652.7 100.9"/><path d="M648.5 106.3Q651.7 103.6 654.8 101.0"/><path d="M651.8 106.4Q654.4 102.5 657.0 101.0"/><path d="M655.0 106.5Q657.0 89.4 659.1 101.1"/><path d="M658.2 106.5Q659.7 77.8 661.2 101.2"/><path d="M661.4 106.5Q662.4 97.1 663.4 101.2"/><path d="M664.7 106.6Q665.1 103.4 665.5 101.3"/><path d="M667.9 106.6Q667.8 103.6 667.7 101.3"/><path d="M671.1 106.7Q670.5 103.6 669.8 101.4"/><path d="M653.6 103.8C656.4 103.0 657.2 90.7 659.2 89.8C661.2 90.7 662.2 103.2 665.2 104.0Z" fill="#dcdcdc" fill-opacity="0.42" stroke="none"/></g>
<g opacity="0.9" stroke="#a0a0a0" stroke-width="0.55" fill="none"><path d="M375.4 102.5L381.4 98.6L400.8 100.9L391 103.2Z" fill="#a0a0a0" fill-opacity="0.38" stroke="none"/><path d="M375.4 102.5L376.0 102.5L376.7 102.6L377.3 102.6L378.0 102.6L378.6 102.6L379.3 102.7L379.9 102.7L380.6 102.7L381.2 102.7L381.9 102.7L382.6 102.6L383.2 102.4L383.8 102.0L384.5 101.7L385.1 101.6L385.8 101.7L386.4 102.1L387.1 102.5L387.8 102.8L388.4 103.0L389.1 103.1L389.7 103.3L390.4 103.5L391.0 103.8"/><path d="M377.4 101.2L378.1 101.3L378.8 101.3L379.5 101.4L380.2 101.4L380.9 101.4L381.6 101.3L382.3 100.8L383.0 99.6L383.7 97.5L384.4 95.2L385.1 94.1L385.8 95.0L386.5 97.2L387.2 99.5L387.9 101.0L388.6 101.8L389.3 102.4L390.0 103.2L390.8 104.6L391.5 106.5L392.2 107.8L392.9 107.9L393.6 106.6L394.3 104.9"/><path d="M379.4 99.9L380.2 100.0L380.9 100.0L381.7 99.9L382.4 99.3L383.2 97.8L383.9 95.4L384.7 93.3L385.4 92.9L386.2 94.8L387.0 97.4L387.7 99.4L388.5 100.4L389.2 101.1L390.0 101.9L390.7 103.4L391.5 105.4L392.2 106.8L393.0 106.6L393.8 105.0L394.5 103.2L395.3 102.1L396.0 101.7L396.8 101.6L397.5 101.7"/><path d="M381.4 98.6L382.2 98.6L383.0 98.4L383.8 98.1L384.6 97.7L385.4 97.7L386.2 98.2L387.1 98.7L387.9 99.2L388.7 99.4L389.5 99.6L390.3 99.9L391.1 100.4L391.9 100.8L392.7 101.0L393.5 100.8L394.3 100.5L395.1 100.4L395.9 100.4L396.8 100.4L397.6 100.5L398.4 100.6L399.2 100.7L400.0 100.8L400.8 100.9"/><path d="M381.6 100.6C383.8 99.8 384.4 92.6 385.2 91.7C386.2 92.6 386.8 99.8 388.8 101.2Z" fill="#a0a0a0" fill-opacity="0.42" stroke="none"/><path d="M389.4 102C391 102.6 391.8 107.6 392.5 108.5C393.3 107.6 394 102.8 396 101.6Z" fill="#a0a0a0" fill-opacity="0.42" stroke="none"/><path d="M375.4 102.5L391 103.2L400.8 100.9L381.4 98.6Z"/></g>
<path d="M428 88L443.2 88L436.6 112L428 112Z" fill="url(#s1a)"/><path d="M443.2 88L452 88L452 112L436.6 112Z" fill="url(#s1b)"/><path d="M443.5 86.5L436.3 113" stroke="#0a0a0a" stroke-width="1.6"/>
<path d="M698 88L713.2 88L706.6 111.5L698 111.5Z" fill="url(#s2a)"/><path d="M713.2 88L722 88L722 111.5L706.6 111.5Z" fill="url(#s2b)"/><path d="M713.5 86.5L706.3 112.5" stroke="#0a0a0a" stroke-width="1.6"/>
<path d="M611.2 92L631.9 93.2L631.9 107.2L608.2 105.3Z" fill="url(#q2)"/>
<rect x="278" y="147" width="1" height="25" fill="#808080"/>
</svg>
</body></html>
